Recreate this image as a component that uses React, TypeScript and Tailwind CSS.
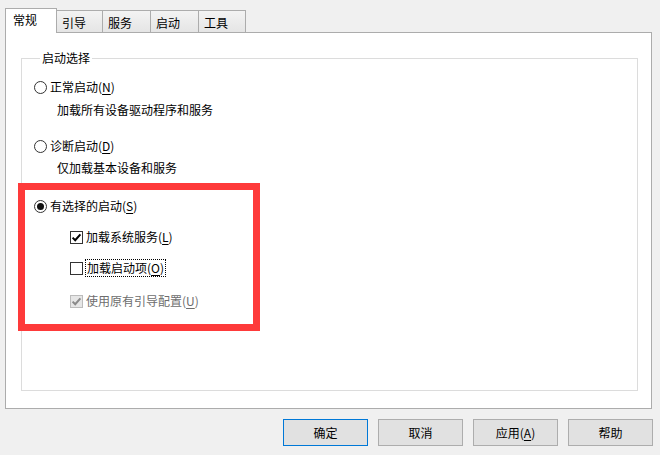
import React from 'react';

const font = { fontFamily: '"Noto Sans CJK SC", "Noto Sans", sans-serif' };

function Radio({ checked }: { checked?: boolean }) {
  return (
    <svg width="13" height="13" viewBox="0 0 13 13" className="shrink-0">
      <circle cx="6.5" cy="6.5" r="6" fill="#fff" stroke="#333" strokeWidth="1" />
      {checked && <circle cx="6.5" cy="6.5" r="3.5" fill="#111" />}
    </svg>
  );
}

function Check({ checked, disabled }: { checked?: boolean; disabled?: boolean }) {
  const edge = disabled ? '#bcbcbc' : '#333';
  const fill = disabled ? '#e6e6e6' : '#fff';
  const mark = disabled ? '#8a8a8a' : '#000';
  return (
    <svg width="13" height="13" viewBox="0 0 13 13" className="shrink-0">
      <rect x="0.5" y="0.5" width="12" height="12" fill={fill} stroke={edge} />
      {checked && (
        <path d="M2.6 6.6 L5.2 9.2 L10.4 3.4" fill="none" stroke={mark} strokeWidth="2" />
      )}
    </svg>
  );
}

function Key({ k }: { k: string }) {
  return (
    <>
      (<span className="underline underline-offset-2">{k}</span>)
    </>
  );
}

const tabs = [
  { label: '引导', w: 'w-[46px]' },
  { label: '服务', w: 'w-[48px]' },
  { label: '启动', w: 'w-[48px]' },
  { label: '工具', w: 'w-[47px]' },
];

const buttons = [
  { label: '确定', primary: true },
  { label: '取消' },
  { label: '应用', key: 'A' },
  { label: '帮助' },
];

export default function App() {
  return (
    <div
      className="relative w-[660px] h-[455px] bg-[#f0f0f0] text-[12px] leading-[16px] text-black overflow-hidden"
      style={font}
    >
      {/* tab strip */}
      <div className="flex items-end pl-[5px] pt-[8px] h-[33px] relative z-10">
        <div className="w-[52px] h-[25px] bg-white border border-b-0 border-[#acacac] pl-[7px] pt-[3px]">
          常规
        </div>
        {tabs.map((t) => (
          <div
            key={t.label}
            className={`${t.w} h-[22px] mb-px border-t border-r border-[#acacac] bg-linear-to-b from-[#f3f3f3] to-[#e5e5e5] pl-[5px] pt-[4px]`}
          >
            {t.label}
          </div>
        ))}
      </div>

      {/* panel */}
      <div className="ml-[5px] w-[647px] -mt-px h-[377px] bg-white border border-[#acacac] pt-[17px] pl-[15px] pr-[13px]">
        <fieldset className="h-[341px] border border-[#dcdcdc] pl-[12px] pt-[11px]">
          <legend className="ml-[6px] px-[2px]">启动选择</legend>

          <div className="flex flex-col">
            <div className="flex items-center gap-[3px] h-[20px]">
              <Radio />
              <span>
                正常启动<Key k="N" />
              </span>
            </div>
            <div className="h-[20px] mt-[3px] pl-[23px] flex items-center">加载所有设备驱动程序和服务</div>

            <div className="flex items-center gap-[3px] h-[20px] mt-[16px]">
              <Radio />
              <span>
                诊断启动<Key k="D" />
              </span>
            </div>
            <div className="h-[20px] mt-[2px] pl-[23px] flex items-center">仅加载基本设备和服务</div>

            <div className="flex items-center gap-[3px] h-[20px] mt-[18px]">
              <Radio checked />
              <span>
                有选择的启动<Key k="S" />
              </span>
            </div>

            <div className="flex flex-col pl-[36px]">
              <div className="flex items-center gap-[3px] h-[20px] mt-[11px]">
                <Check checked />
                <span>
                  加载系统服务<Key k="L" />
                </span>
              </div>
              <div className="flex items-center gap-[2px] h-[20px] mt-[11px]">
                <Check />
                <span className="border border-dotted border-black px-px leading-[16px]">
                  加载启动项<Key k="O" />
                </span>
              </div>
              <div className="flex items-center gap-[3px] h-[20px] mt-[13px] text-[#6d6d6d]">
                <Check checked disabled />
                <span>
                  使用原有引导配置<Key k="U" />
                </span>
              </div>
            </div>
          </div>
        </fieldset>
      </div>

      {/* dialog buttons */}
      <div className="flex justify-end gap-[10px] pr-[7px] mt-[10px]">
        {buttons.map((b) => (
          <button
            key={b.label}
            className={`w-[85px] h-[27px] bg-[#e1e1e1] border ${
              b.primary ? 'border-[#0078d7]' : 'border-[#adadad]'
            } flex items-center justify-center`}
          >
            {b.label}
            {b.key && <Key k={b.key} />}
          </button>
        ))}
      </div>

      {/* annotation */}
      <div className="absolute left-[18px] top-[183px] w-[242px] h-[148px] border-[7px] border-[#fe3a3a] pointer-events-none" />
    </div>
  );
}
